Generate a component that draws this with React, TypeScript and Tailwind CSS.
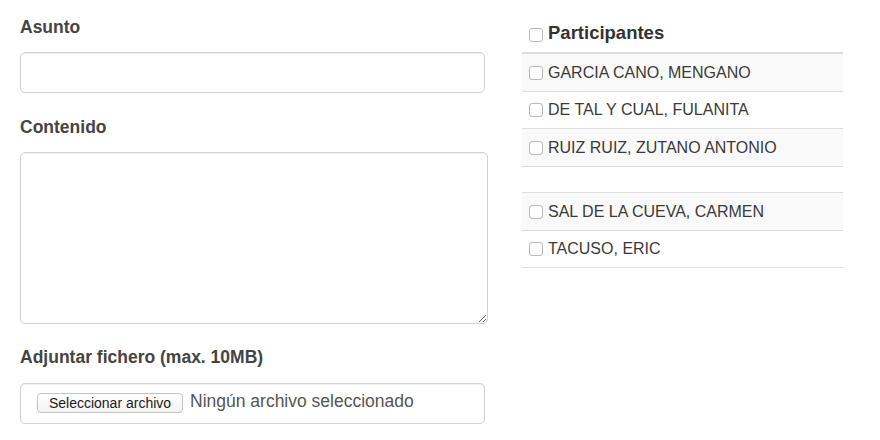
import React from "react";

const Check = ({ className = "" }: { className?: string }) => (
  <span
    className={`inline-block w-[14px] h-[14px] shrink-0 rounded-[3px] border border-[#b8b8b8] bg-white ${className}`}
  />
);

const rows: { name: string; h: string; stripe: boolean; top2?: boolean }[] = [
  { name: "GARCIA CANO, MENGANO", h: "h-[39px]", stripe: true, top2: true },
  { name: "DE TAL Y CUAL, FULANITA", h: "h-[37px]", stripe: false },
  { name: "RUIZ RUIZ, ZUTANO ANTONIO", h: "h-[38px]", stripe: true },
  { name: "", h: "h-[26px]", stripe: false },
  { name: "SAL DE LA CUEVA, CARMEN", h: "h-[38px]", stripe: true },
  { name: "TACUSO, ERIC", h: "h-[38px]", stripe: false },
];

export default function App() {
  return (
    <div
      className="w-[880px] h-[440px] bg-white flex text-[#333] overflow-hidden"
      style={{ fontFamily: '"Liberation Sans", Arial, sans-serif' }}
    >
      {/* Left column */}
      <div className="pl-[20px] w-[490px] flex flex-col">
        <div className="pt-[17px] text-[17.5px] leading-[20px] font-bold text-[#444]">Asunto</div>
        <input
          type="text"
          className="mt-[15px] w-[465px] h-[41px] rounded-[5px] border border-[#d2d2d2] shadow-[inset_0_1px_1px_rgba(0,0,0,0.06)] outline-none px-3"
        />
        <div className="mt-[24px] text-[17.5px] leading-[20px] font-bold text-[#444]">Contenido</div>
        <textarea
          className="mt-[15px] w-[468px] h-[172px] rounded-[5px] border border-[#d2d2d2] shadow-[inset_0_1px_1px_rgba(0,0,0,0.06)] outline-none px-3 py-2 resize"
        />
        <div className="mt-[23px] text-[17.5px] leading-[20px] font-bold text-[#444]">
          Adjuntar fichero (max. 10MB)
        </div>
        <div className="mt-[16px] w-[465px] h-[41px] rounded-[5px] border border-[#d2d2d2] shadow-[inset_0_1px_1px_rgba(0,0,0,0.06)] flex items-center pl-[16px]">
          <span className="-mt-[2px] h-[20px] w-[146px] rounded-[4px] border border-[#c4c4c4] bg-gradient-to-b from-white to-[#f3f3f3] flex items-center justify-center text-[14px] text-[#1a1a1a] leading-none">
            Seleccionar archivo
          </span>
          <span className="ml-[7px] -mt-[4px] text-[17.5px] text-[#555] leading-none">
            Ningún archivo seleccionado
          </span>
        </div>
      </div>

      {/* Right column */}
      <div className="ml-[32px] w-[321px] flex flex-col">
        <div className="h-[52px] flex items-start pl-[7px] pt-[22px]">
          <Check className="mt-[6px] mr-[5px]" />
          <span className="text-[18.5px] leading-[21px] font-bold text-[#333]">Participantes</span>
        </div>
        {rows.map((r, i) => (
          <div
            key={i}
            className={`${r.h} flex items-center pl-[7px] ${r.top2 ? "border-t-2" : "border-t"} border-[#dddddd] ${
              r.stripe ? "bg-[#f9f9f9]" : "bg-white"
            } ${i === rows.length - 1 ? "border-b" : ""}`}
          >
            {r.name && (
              <>
                <Check className="mr-[5px]" />
                <span className="text-[16px] leading-none text-[#3a3a3a]">{r.name}</span>
              </>
            )}
          </div>
        ))}
      </div>
    </div>
  );
}
